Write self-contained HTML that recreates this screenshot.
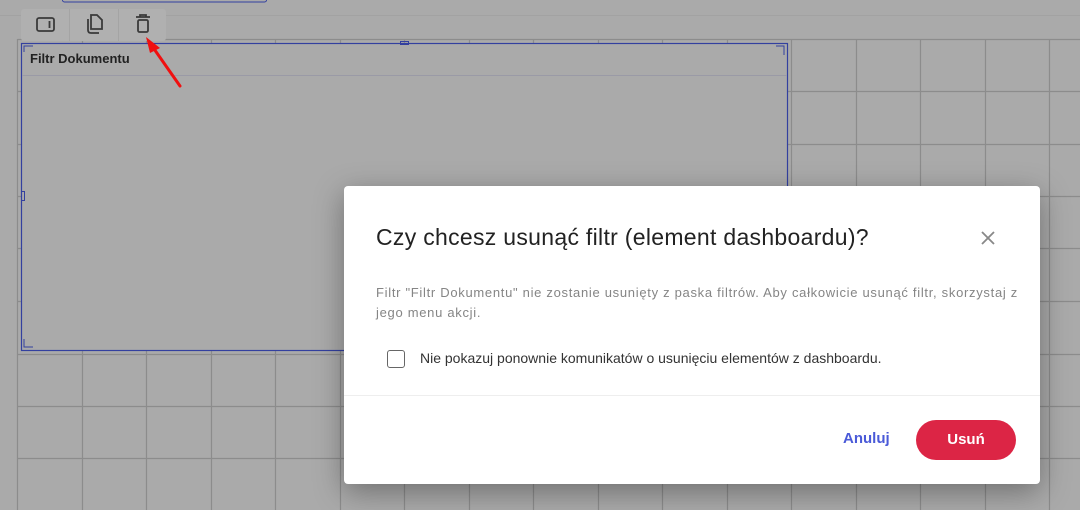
<!DOCTYPE html>
<html><head><meta charset="utf-8"><style>
*{margin:0;padding:0;box-sizing:border-box}
body{width:1080px;height:510px;overflow:hidden;background:#aaaaaa;font-family:"Liberation Sans",sans-serif;position:relative}
.abs{position:absolute}
</style></head><body>
<svg class="abs" style="left:0;top:0" width="1080" height="510">
<line x1="0" y1="15.5" x2="1080" y2="15.5" stroke="#a2a2a2" stroke-width="1"/>
<rect x="62.5" y="-5" width="204" height="7" rx="2" fill="none" stroke="#3340a0"/>
<g stroke="#8c8c8c" stroke-width="1.2">
<line x1="17.5" y1="39.5" x2="1080" y2="39.5"/>
<line x1="17.5" y1="91.5" x2="1080" y2="91.5"/>
<line x1="17.5" y1="144.5" x2="1080" y2="144.5"/>
<line x1="17.5" y1="196.5" x2="1080" y2="196.5"/>
<line x1="17.5" y1="248.5" x2="1080" y2="248.5"/>
<line x1="17.5" y1="301.5" x2="1080" y2="301.5"/>
<line x1="17.5" y1="354.5" x2="1080" y2="354.5"/>
<line x1="17.5" y1="406.5" x2="1080" y2="406.5"/>
<line x1="17.5" y1="458.5" x2="1080" y2="458.5"/>
<line x1="17.5" y1="39" x2="17.5" y2="510"/>
<line x1="82.5" y1="39" x2="82.5" y2="510"/>
<line x1="146.5" y1="39" x2="146.5" y2="510"/>
<line x1="211.5" y1="39" x2="211.5" y2="510"/>
<line x1="275.5" y1="39" x2="275.5" y2="510"/>
<line x1="340.5" y1="39" x2="340.5" y2="510"/>
<line x1="404.5" y1="39" x2="404.5" y2="510"/>
<line x1="469.5" y1="39" x2="469.5" y2="510"/>
<line x1="533.5" y1="39" x2="533.5" y2="510"/>
<line x1="598.5" y1="39" x2="598.5" y2="510"/>
<line x1="662.5" y1="39" x2="662.5" y2="510"/>
<line x1="727.5" y1="39" x2="727.5" y2="510"/>
<line x1="791.5" y1="39" x2="791.5" y2="510"/>
<line x1="856.5" y1="39" x2="856.5" y2="510"/>
<line x1="920.5" y1="39" x2="920.5" y2="510"/>
<line x1="985.5" y1="39" x2="985.5" y2="510"/>
<line x1="1049.5" y1="39" x2="1049.5" y2="510"/>
</g>
<rect x="21.5" y="43.5" width="766" height="307" fill="#aaaaaa" stroke="#33409f" stroke-width="1.2"/>
<line x1="22" y1="75.5" x2="787" y2="75.5" stroke="#9a9aa6"/>
<path d="M24 52 V46 H33" fill="none" stroke="#33409f"/>
<path d="M776 46 H784 V55" fill="none" stroke="#33409f"/>
<path d="M24 339 V347 H33" fill="none" stroke="#33409f"/>
<rect x="400.5" y="41.5" width="8" height="3" fill="none" stroke="#33409f"/>
<rect x="21.5" y="191.5" width="3" height="9" fill="none" stroke="#33409f"/>
<rect x="21" y="9" width="145" height="32" rx="3" fill="#b0b0b0"/>
<line x1="69.5" y1="9" x2="69.5" y2="41" stroke="#a4a4a4"/>
<line x1="118.5" y1="9" x2="118.5" y2="41" stroke="#a4a4a4"/>
<rect x="37" y="18" width="17" height="13" rx="2" fill="none" stroke="#3a3a3a" stroke-width="1.8"/>
<line x1="49.5" y1="21" x2="49.5" y2="28" stroke="#3a3a3a" stroke-width="1.8"/>
<path d="M88 19 V30 Q88 33 91 33 H99" fill="none" stroke="#3a3a3a" stroke-width="1.8"/>
<path d="M91 15 H97 L102 20 V29 H91 Z" fill="none" stroke="#3a3a3a" stroke-width="1.8"/>
<path d="M136 17 H150 M140 17 V15 H146 V17" fill="none" stroke="#3a3a3a" stroke-width="1.8"/>
<rect x="138" y="20" width="10" height="12" rx="1.5" fill="none" stroke="#3a3a3a" stroke-width="1.8"/>
<line x1="180" y1="86" x2="152" y2="46" stroke="#f01010" stroke-width="3" stroke-linecap="round"/>
<path d="M146 37 L160 48 L150 53 Z" fill="#f01010"/>
</svg>
<div class="abs" style="left:30px;top:51px;font-size:13px;font-weight:bold;color:#222">Filtr Dokumentu</div>

<div class="abs" style="left:344px;top:186px;width:696px;height:298px;background:#fff;border-radius:4px;box-shadow:0 8px 30px rgba(0,0,0,0.35)">
  <div class="abs" style="left:32px;top:38px;font-size:23px;color:#222;letter-spacing:0.3px;white-space:nowrap">Czy chcesz usunąć filtr (element dashboardu)?</div>
  <svg class="abs" style="left:636px;top:44px" width="16" height="16"><path d="M2 2 L14 14 M14 2 L2 14" stroke="#888" stroke-width="1.8"/></svg>
  <div class="abs" style="left:32px;top:97px;width:660px;font-size:13px;line-height:20px;color:#858585;letter-spacing:0.7px;white-space:nowrap">Filtr "Filtr Dokumentu" nie zostanie usunięty z paska filtrów. Aby całkowicie usunąć filtr, skorzystaj z<br>jego menu akcji.</div>
  <div class="abs" style="left:43px;top:164px;width:18px;height:18px;border:1.5px solid #666;border-radius:3px"></div>
  <div class="abs" style="left:76px;top:164px;font-size:14px;color:#333;white-space:nowrap;letter-spacing:0px">Nie pokazuj ponownie komunikatów o usunięciu elementów z dashboardu.</div>
  <div class="abs" style="left:0;top:209px;width:696px;height:1px;background:#eeeeee"></div>
  <div class="abs" style="left:499px;top:244px;font-size:15px;font-weight:bold;color:#4a5ad8">Anuluj</div>
  <div class="abs" style="left:572px;top:234px;width:100px;height:40px;border-radius:20px;background:#dc2545;color:#fff;font-size:15px;font-weight:bold;text-align:center;line-height:40px">Usuń</div>
</div>
</body></html>
